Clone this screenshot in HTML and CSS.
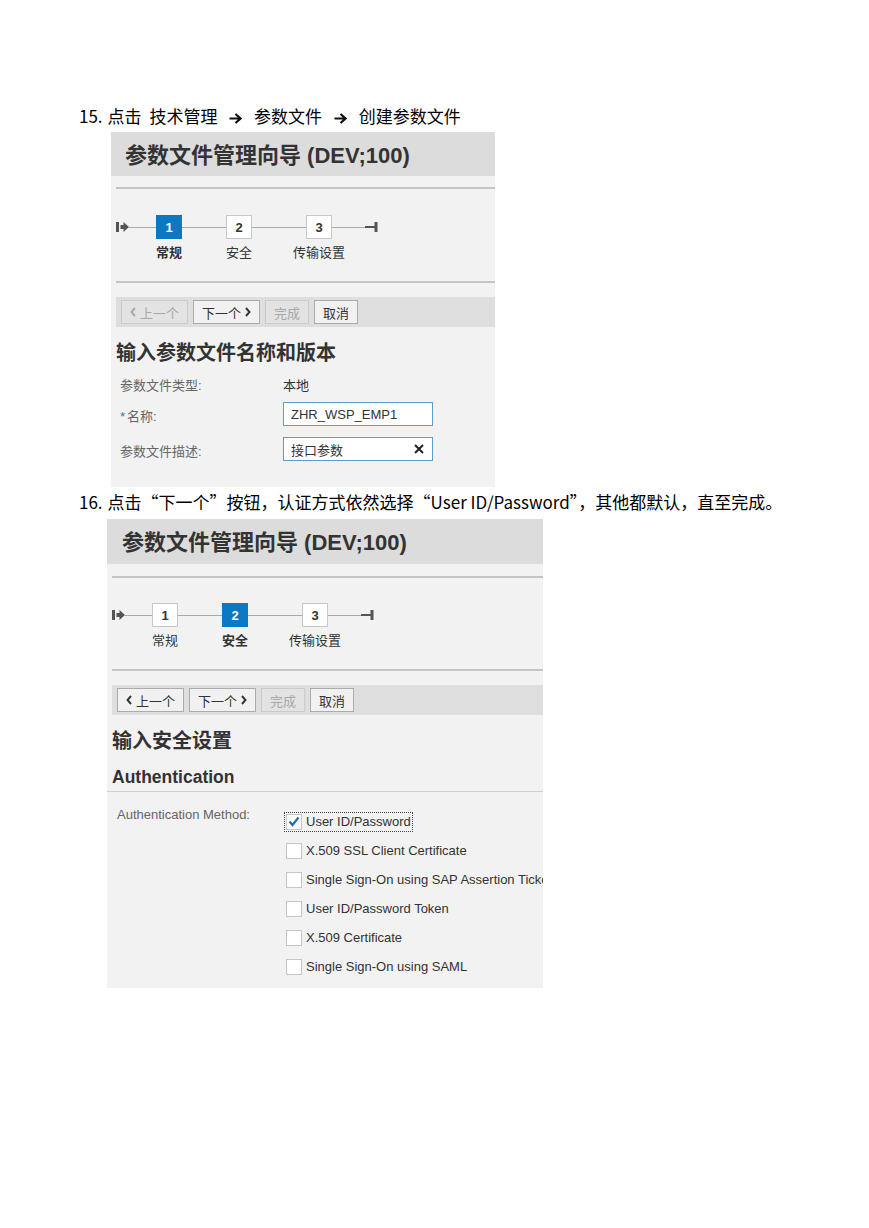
FILE: index.html
```html
<!DOCTYPE html>
<html lang="zh-CN">
  <head>
    <meta charset="UTF-8" />
    <meta name="viewport" content="width=device-width, initial-scale=1.0" />
    <title>参数文件管理向导</title>
    <link rel="stylesheet" href="styles.css">
  </head>
  <body>
    <div class="page">
      <p class="step step-path"><span class="num">15.</span>点击 技术管理 <svg class="arrow" viewBox="0 0 13 11"><path d="M0.5 5.5H11.5M6.5 1L11.5 5.5L6.5 10" /></svg> 参数文件 <svg class="arrow" viewBox="0 0 13 11"><path d="M0.5 5.5H11.5M6.5 1L11.5 5.5L6.5 10" /></svg> 创建参数文件</p>

      <!-- 第一步：常规 -->
      <div class="shot shot-first">
        <div class="wiz-head">参数文件管理向导 (DEV;100)</div>
        <div class="divider"></div>
        <div class="roadmap">
          <svg class="rm-start" viewBox="0 0 13 10"><rect x="0" y="0" width="3" height="10" /><path d="M4.5 3H7.5V0L13 5L7.5 10V7H4.5Z" /></svg>
          <span class="rm-link rm-link-a"></span>
          <div class="rm-step current"><span class="rm-box">1</span><span class="rm-label">常规</span></div>
          <span class="rm-link rm-link-b"></span>
          <div class="rm-step"><span class="rm-box">2</span><span class="rm-label">安全</span></div>
          <span class="rm-link rm-link-c"></span>
          <div class="rm-step"><span class="rm-box">3</span><span class="rm-label">传输设置</span></div>
          <span class="rm-link rm-link-d"></span>
          <svg class="rm-end" viewBox="0 0 13 10"><rect x="0" y="4" width="10" height="2" /><rect x="9.5" y="0" width="3" height="10" /></svg>
        </div>
        <div class="divider divider-bottom"></div>
        <div class="toolbar">
          <span class="btn disabled"><svg class="chev" viewBox="0 0 6 10"><path d="M5 1L1.5 5L5 9" /></svg>上一个</span>
          <span class="btn">下一个<svg class="chev" viewBox="0 0 6 10"><path d="M1 1L4.5 5L1 9" /></svg></span>
          <span class="btn disabled">完成</span>
          <span class="btn">取消</span>
        </div>
        <h2 class="wiz-title">输入参数文件名称和版本</h2>
        <div class="form">
          <div class="form-row">
            <span class="form-label">参数文件类型:</span>
            <span class="form-value">本地</span>
          </div>
          <div class="form-row">
            <span class="form-label"><span class="required">*</span>名称:</span>
            <span class="field">ZHR_WSP_EMP1</span>
          </div>
          <div class="form-row">
            <span class="form-label">参数文件描述:</span>
            <span class="field">接口参数<svg class="clear" viewBox="0 0 10 10"><path d="M1 1L9 9M9 1L1 9" /></svg></span>
          </div>
        </div>
      </div>

      <p class="step step-next"><span class="num">16.</span>点击“下一个”按钮，认证方式依然选择“User ID/Password”，其他都默认，直至完成。</p>

      <!-- 第二步：安全 -->
      <div class="shot shot-second">
        <div class="wiz-head">参数文件管理向导 (DEV;100)</div>
        <div class="divider"></div>
        <div class="roadmap">
          <svg class="rm-start" viewBox="0 0 13 10"><rect x="0" y="0" width="3" height="10" /><path d="M4.5 3H7.5V0L13 5L7.5 10V7H4.5Z" /></svg>
          <span class="rm-link rm-link-a"></span>
          <div class="rm-step"><span class="rm-box">1</span><span class="rm-label">常规</span></div>
          <span class="rm-link rm-link-b"></span>
          <div class="rm-step current"><span class="rm-box">2</span><span class="rm-label">安全</span></div>
          <span class="rm-link rm-link-c"></span>
          <div class="rm-step"><span class="rm-box">3</span><span class="rm-label">传输设置</span></div>
          <span class="rm-link rm-link-d"></span>
          <svg class="rm-end" viewBox="0 0 13 10"><rect x="0" y="4" width="10" height="2" /><rect x="9.5" y="0" width="3" height="10" /></svg>
        </div>
        <div class="divider divider-bottom"></div>
        <div class="toolbar">
          <span class="btn"><svg class="chev" viewBox="0 0 6 10"><path d="M5 1L1.5 5L5 9" /></svg>上一个</span>
          <span class="btn">下一个<svg class="chev" viewBox="0 0 6 10"><path d="M1 1L4.5 5L1 9" /></svg></span>
          <span class="btn disabled">完成</span>
          <span class="btn">取消</span>
        </div>
        <h2 class="wiz-title">输入安全设置</h2>
        <h3 class="section-title">Authentication</h3>
        <div class="auth">
          <span class="auth-label">Authentication Method:</span>
          <div class="options">
            <div class="option focused">
              <span class="option-inner"><span class="checkbox"><svg class="check" viewBox="0 0 12 11"><path d="M1.5 5.5L4.5 9L10.5 1.5" /></svg></span>User ID/Password</span>
            </div>
            <div class="option"><span class="option-inner"><span class="checkbox"></span>X.509 SSL Client Certificate</span></div>
            <div class="option"><span class="option-inner"><span class="checkbox"></span>Single Sign-On using SAP Assertion Ticket</span></div>
            <div class="option"><span class="option-inner"><span class="checkbox"></span>User ID/Password Token</span></div>
            <div class="option"><span class="option-inner"><span class="checkbox"></span>X.509 Certificate</span></div>
            <div class="option"><span class="option-inner"><span class="checkbox"></span>Single Sign-On using SAML</span></div>
          </div>
        </div>
      </div>
    </div>
  </body>
</html>
```

FILE: styles.css
```css
body {
  margin: 0;
  background: #fff;
  color: #000;
}

.page {
  padding: 106px 0 40px 79px;
}

.step {
  margin: 0;
  height: 20px;
  font-family: "Noto Sans CJK SC", sans-serif;
  font-size: 17px;
  line-height: 20px;
  white-space: nowrap;
}

.step .num {
  margin-right: 5px;
}

.step-path {
  word-spacing: 4px;
}

.step-next {
  margin-top: 5px;
}

.arrow {
  width: 13px;
  height: 11px;
  margin: 0 4px;
  vertical-align: -1px;
  fill: none;
  stroke: #111;
  stroke-width: 2.2;
}

.shot {
  margin-top: 6px;
  background: #f2f2f2;
  overflow: hidden;
  font-family: "Liberation Sans", "Noto Sans CJK SC", sans-serif;
  color: #333;
}

.shot-first {
  width: 384px;
  margin-left: 32px;
}

.shot-second {
  width: 436px;
  margin-left: 28px;
  margin-top: 7px;
}

.wiz-head {
  height: 44px;
  padding-left: 14px;
  background: #dcdcdc;
  font-size: 22px;
  font-weight: bold;
  line-height: 48px;
  white-space: nowrap;
}

.shot-second .wiz-head {
  height: 45px;
  padding-left: 15px;
}

.divider {
  height: 2px;
  margin: 11px 0 0 5px;
  background: #c4c4c4;
}

.shot-second .divider {
  margin-top: 12px;
}

.shot .divider-bottom {
  margin-top: 0;
}

/* roadmap */
.roadmap {
  display: flex;
  align-items: flex-start;
  padding: 26px 0 20px 5px;
}

.shot-second .roadmap {
  padding-top: 25px;
}

.rm-start,
.rm-end {
  width: 13px;
  height: 10px;
  margin-top: 7px;
  fill: #555;
}

.rm-link {
  height: 1px;
  margin-top: 12px;
  background: #a9a9a9;
}

.rm-link-a { width: 27px; }
.rm-link-b { width: 44px; }
.rm-link-c { width: 54px; }
.rm-link-d { width: 33px; }

.rm-step {
  width: 26px;
  display: flex;
  flex-direction: column;
  align-items: center;
}

.rm-box {
  box-sizing: border-box;
  width: 26px;
  height: 24px;
  display: flex;
  align-items: center;
  justify-content: center;
  background: #fff;
  border: 1px solid #c8c8c8;
  font-size: 13px;
  font-weight: bold;
  color: #333;
}

.rm-label {
  margin-top: 6px;
  font-size: 13px;
  line-height: 16px;
  white-space: nowrap;
  color: #333;
}

.rm-step.current .rm-box {
  background: #0a78c2;
  border-color: #0a78c2;
  color: #fff;
}

.rm-step.current .rm-label {
  font-weight: bold;
}

/* toolbar */
.toolbar {
  display: flex;
  gap: 5px;
  height: 30px;
  box-sizing: border-box;
  margin: 14px 0 0 5px;
  padding: 3px 5px;
  background: #dedede;
}

.btn {
  box-sizing: border-box;
  height: 24px;
  display: flex;
  align-items: center;
  gap: 4px;
  padding: 0 8px;
  background: #f1f1f1;
  border: 1px solid #ababab;
  font-size: 13px;
  color: #333;
}

.btn.disabled {
  background: #e3e3e3;
  border-color: #cbcbcb;
  color: #a8a8a8;
}

.chev {
  width: 6px;
  height: 10px;
  fill: none;
  stroke: currentColor;
  stroke-width: 1.9;
}

.wiz-title {
  margin: 14px 0 0 5px;
  font-size: 20px;
  font-weight: bold;
  line-height: 24px;
  color: #333;
}

/* form */
.form {
  padding: 6px 0 26px 9px;
}

.form-row {
  display: flex;
  height: 24px;
  margin-bottom: 11px;
}

.form-row:first-child {
  margin-bottom: 7px;
}

.form-row:last-child {
  margin-bottom: 0;
}

.form-label {
  width: 163px;
  padding-top: 7px;
  font-size: 13px;
  line-height: 16px;
  color: #666;
}

.form-value {
  padding-top: 7px;
  font-size: 13px;
  line-height: 16px;
  color: #333;
}

.required {
  margin-right: 2px;
  color: #2a7fc0;
}

.field {
  box-sizing: border-box;
  width: 150px;
  height: 24px;
  display: flex;
  align-items: center;
  justify-content: space-between;
  padding: 0 8px 0 7px;
  background: #fff;
  border: 1px solid #5b9ec9;
  font-size: 13px;
  color: #333;
}

.clear {
  width: 10px;
  height: 10px;
  fill: none;
  stroke: #222;
  stroke-width: 2;
}

/* authentication */
.section-title {
  margin: 13px 0 0;
  padding: 0 0 3px 5px;
  font-size: 17.5px;
  font-weight: bold;
  line-height: 22px;
  color: #333;
  border-bottom: 1px solid #cfcfcf;
}

.auth {
  display: flex;
  padding: 15px 0 7px 10px;
}

.auth-label {
  flex: none;
  width: 169px;
  font-size: 13px;
  line-height: 16px;
  color: #666;
  white-space: nowrap;
}

.options {
  display: flex;
  flex-direction: column;
}

.option {
  display: flex;
  align-items: center;
  height: 29px;
  font-size: 13px;
  color: #333;
  white-space: nowrap;
}

.option-inner {
  display: flex;
  align-items: center;
  gap: 4px;
}

.option.focused .option-inner {
  outline: 1px dotted #444;
  outline-offset: 1px;
}

.checkbox {
  box-sizing: border-box;
  width: 16px;
  height: 16px;
  display: flex;
  align-items: center;
  justify-content: center;
  background: #fff;
  border: 1px solid #c6c6c6;
}

.check {
  width: 12px;
  height: 11px;
  fill: none;
  stroke: #1d6fb8;
  stroke-width: 2.2;
}
```
